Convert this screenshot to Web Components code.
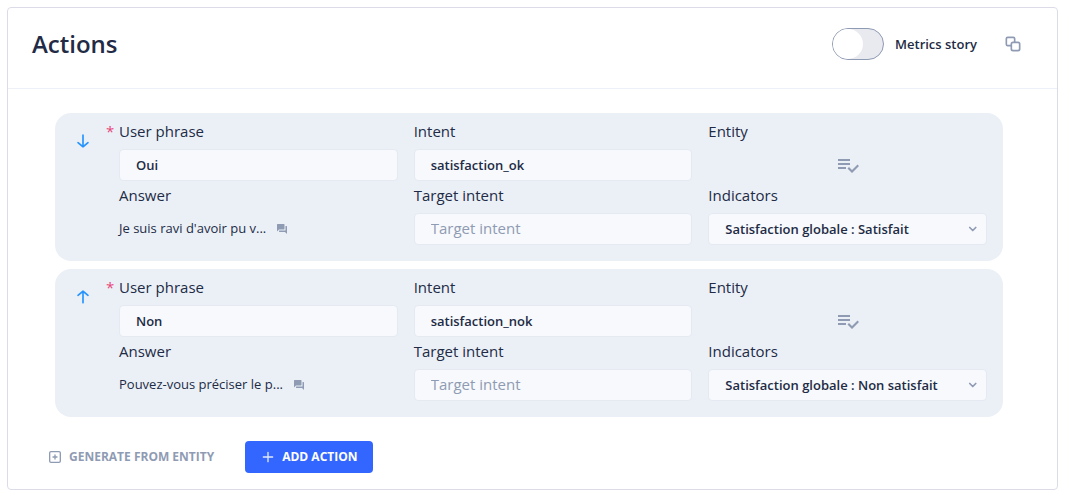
<!DOCTYPE html>
<html lang="en">
<head>
<meta charset="utf-8">
<meta name="viewport" content="width=device-width, initial-scale=1">
<title>Actions</title>
<style>
  body {
    margin: 7px;
    background: #fff;
    color: #222b45;
    font: 400 15px/24px "Open Sans", "Noto Sans", sans-serif;
  }
</style>
</head>
<body>
<story-card>
  <h1 slot="title">Actions</h1>
  <toggle-switch slot="tools" label="Metrics story"></toggle-switch>
  <icon-button slot="tools" icon="copy" label="Copy" size="20"></icon-button>

  <action-row move="down" phrase="Oui" intent="satisfaction_ok"
    answer="Je suis ravi d'avoir pu v..." indicator="Satisfaction globale : Satisfait"></action-row>
  <action-row move="up" phrase="Non" intent="satisfaction_nok"
    answer="Pouvez-vous préciser le p..." indicator="Satisfaction globale : Non satisfait"></action-row>

  <action-button slot="footer" icon="plus-square">Generate from entity</action-button>
  <action-button slot="footer" icon="plus" primary>Add action</action-button>
</story-card>

<script>
const ICONS = {
  copy: '<svg viewBox="0 0 24 24"><path fill="currentColor" d="M18 9h-3V5.67A2.68 2.68 0 0 0 12.33 3H5.67A2.68 2.68 0 0 0 3 5.67v6.66A2.68 2.68 0 0 0 5.67 15H9v3a3 3 0 0 0 3 3h6a3 3 0 0 0 3-3v-6a3 3 0 0 0-3-3zm-9 3v1H5.67a.67.67 0 0 1-.67-.67V5.67A.67.67 0 0 1 5.67 5h6.66a.67.67 0 0 1 .67.67V9h-1a3 3 0 0 0-3 3zm10 6a1 1 0 0 1-1 1h-6a1 1 0 0 1-1-1v-6a1 1 0 0 1 1-1h6a1 1 0 0 1 1 1z"/></svg>',
  down: '<svg viewBox="0 0 24 24"><path fill="currentColor" d="M18.77 13.36a1 1 0 0 0-1.41-.13L13 16.86V5a1 1 0 0 0-2 0v11.86l-4.36-3.63a1 1 0 1 0-1.28 1.54l6 5 .15.09.13.07a1 1 0 0 0 .72 0l.13-.07.15-.09 6-5a1 1 0 0 0 .13-1.41z"/></svg>',
  up: '<svg viewBox="0 0 24 24"><path fill="currentColor" d="M5.23 10.64a1 1 0 0 0 1.41.13L11 7.14V19a1 1 0 0 0 2 0V7.14l4.36 3.63a1 1 0 1 0 1.28-1.54l-6-5-.15-.09-.13-.07a1 1 0 0 0-.72 0l-.13.07-.15.09-6 5a1 1 0 0 0-.13 1.41z"/></svg>',
  chat: '<svg viewBox="0 0 24 24"><path fill="currentColor" d="M21 6h-2v9H6v2c0 .55.45 1 1 1h11l4 4V7c0-.55-.45-1-1-1zm-4 6V3c0-.55-.45-1-1-1H3c-.55 0-1 .45-1 1v14l4-4h10c.55 0 1-.45 1-1z"/></svg>',
  entities: '<svg viewBox="0 0 24 24"><path fill="currentColor" d="M14 10H2v2h12v-2zm0-4H2v2h12V6zM2 16h8v-2H2v2zm19.5-4.5L23 13l-6.99 7-4.51-4.5L13 14l3.01 3 5.49-5.5z"/></svg>',
  chevron: '<svg viewBox="0 0 24 24"><path fill="none" stroke="currentColor" stroke-width="3.4" stroke-linecap="round" stroke-linejoin="round" d="M5.5 9l6 6 6-6"/></svg>',
  plus: '<svg viewBox="0 0 24 24"><path fill="currentColor" fill-opacity=".85" d="M19 11h-6V5a1 1 0 0 0-2 0v6H5a1 1 0 0 0 0 2h6v6a1 1 0 0 0 2 0v-6h6a1 1 0 0 0 0-2z"/></svg>',
  'plus-square': '<svg viewBox="0 0 24 24"><path fill="currentColor" d="M18 3H6a3 3 0 0 0-3 3v12a3 3 0 0 0 3 3h12a3 3 0 0 0 3-3V6a3 3 0 0 0-3-3zm1 15a1 1 0 0 1-1 1H6a1 1 0 0 1-1-1V6a1 1 0 0 1 1-1h12a1 1 0 0 1 1 1zM15 11h-2V9a1 1 0 0 0-2 0v2H9a1 1 0 0 0 0 2h2v2a1 1 0 0 0 2 0v-2h2a1 1 0 0 0 0-2z"/></svg>'
};

class BaseElement extends HTMLElement {
  connectedCallback() {
    if (this.shadowRoot) return;
    this.attachShadow({ mode: 'open' }).innerHTML =
      '<style>*{box-sizing:border-box} svg{display:block;width:100%;height:100%}</style>' + this.render();
  }
  attr(name) {
    return (this.getAttribute(name) || '').replace(/&/g, '&amp;').replace(/"/g, '&quot;').replace(/</g, '&lt;');
  }
}

customElements.define('story-card', class extends BaseElement {
  render() {
    return `<style>
      :host { display: block; border: 1px solid #dcdce9; border-radius: 4px; background: #fff; }
      header { display: flex; align-items: center; justify-content: space-between;
        min-height: 81px; padding: 0 34px 8px 24px; border-bottom: 1px solid #edf1f7; }
      .tools { display: flex; align-items: center; gap: 26px; }
      ::slotted(h1) { margin: 0; font-size: 24px; line-height: 32px; font-weight: 600; }
      main { display: grid; gap: 8px; padding: 24px 54px 24px 47px; }
      footer { display: flex; align-items: center; gap: 16px; padding: 0 24px 16px; }
    </style>
    <header><slot name="title"></slot><div class="tools"><slot name="tools"></slot></div></header>
    <main><slot></slot></main>
    <footer><slot name="footer"></slot></footer>`;
  }
});

customElements.define('toggle-switch', class extends BaseElement {
  render() {
    return `<style>
      :host { display: block; }
      label { display: flex; align-items: center; gap: 11px; font-size: 13px; font-weight: 600; }
      input { appearance: none; display: flex; width: 52px; height: 32px; margin: 0;
        border: 1px solid #8f9bb3; border-radius: 16px; background: #e9eaf0; }
      input::before { content: ""; width: 30px; height: 30px; border-radius: 50%; background: #fff; }
      input:checked { justify-content: flex-end; background: #3366ff; }
    </style>
    <label><input type="checkbox" role="switch">${this.attr('label')}</label>`;
  }
});

customElements.define('icon-button', class extends BaseElement {
  render() {
    return `<style>
      :host { display: block; color: #8f9bb3; }
      button { display: block; width: ${this.attr('size')}px; height: ${this.attr('size')}px;
        margin: 0; padding: 0; border: 0; background: none; color: inherit; }
    </style>
    <button type="button" aria-label="${this.attr('label')}">${ICONS[this.getAttribute('icon')]}</button>`;
  }
});

customElements.define('action-button', class extends BaseElement {
  render() {
    return `<style>
      :host { display: block; }
      button { display: flex; align-items: center; gap: 6px; height: 32px; margin: 0; padding: 0 15px;
        border: 0; border-radius: 4px; background: none; color: #8f9bb3;
        font: 700 12px/16px "Open Sans", "Noto Sans", sans-serif; text-transform: uppercase; }
      .icon { width: 16px; height: 16px; }
      :host([primary]) button { background: #3366ff; color: #fff; }
    </style>
    <button type="button"><span class="icon">${ICONS[this.getAttribute('icon')]}</span><slot></slot></button>`;
  }
});

customElements.define('form-field', class extends BaseElement {
  render() {
    const value = this.attr('value');
    const control = this.hasAttribute('select')
      ? `<div class="select"><select id="control"><option>${value}</option></select><span class="chevron">${ICONS.chevron}</span></div>`
      : `<input id="control" type="text" value="${value}" placeholder="${this.attr('placeholder')}">`;
    return `<style>
      :host { display: block; min-width: 0; }
      .caption { display: flex; margin-bottom: 6px; }
      .star { width: 13px; margin-left: -13px; color: #e8487a; }
      input, select { appearance: none; display: block; width: 100%; height: 32px; margin: 0; padding: 0 16px;
        border: 1px solid #e4e9f2; border-radius: 4px; background: #f7f9fc; color: #222b45;
        font: 600 13px/24px "Open Sans", "Noto Sans", sans-serif; }
      input::placeholder { color: #8f9bb3; opacity: 1; font-size: 15px; font-weight: 400; }
      .select { display: grid; align-items: center; }
      .select > * { grid-area: 1 / 1; }
      .chevron { justify-self: end; width: 12px; height: 12px; margin-right: 8px; color: #8f9bb3; pointer-events: none; }
      .content { display: flex; align-items: center; height: 32px; }
    </style>
    <div class="caption">${this.hasAttribute('required') ? '<span class="star">*</span>' : ''}${
      this.hasAttribute('custom') ? `<span>${this.attr('label')}</span>` : `<label for="control">${this.attr('label')}</label>`}</div>
    ${this.hasAttribute('custom') ? '<div class="content"><slot></slot></div>' : control}`;
  }
});

customElements.define('action-row', class extends BaseElement {
  render() {
    const move = this.attr('move');
    return `<style>
      :host { display: flex; padding: 6px 16px 16px 18px; border-radius: 16px; background: #ebf0f7; }
      .move { flex: none; width: 46px; padding-top: 12px; }
      .move icon-button { color: #2594ff; }
      .fields { flex: 1; display: grid; grid-template-columns: repeat(3, minmax(0, 1fr)); gap: 2px 16px; }
      .answer { padding: 0 10px 2px 0; font-size: 13px; white-space: nowrap; }
      .center { margin: 0 auto; }
    </style>
    <div class="move"><icon-button icon="${move}" label="Move ${move}" size="20"></icon-button></div>
    <div class="fields">
      <form-field required label="User phrase" value="${this.attr('phrase')}"></form-field>
      <form-field label="Intent" value="${this.attr('intent')}"></form-field>
      <form-field custom label="Entity"><icon-button class="center" icon="entities" label="Entities" size="24"></icon-button></form-field>
      <form-field custom label="Answer"><span class="answer">${this.attr('answer')}</span><icon-button icon="chat" label="Edit answer" size="12"></icon-button></form-field>
      <form-field label="Target intent" placeholder="Target intent"></form-field>
      <form-field select label="Indicators" value="${this.attr('indicator')}"></form-field>
    </div>`;
  }
});
</script>
</body>
</html>
